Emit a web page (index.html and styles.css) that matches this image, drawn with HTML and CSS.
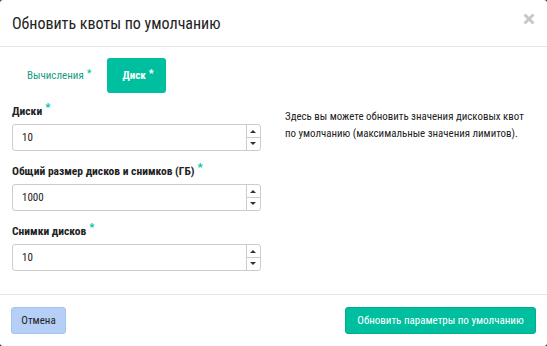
FILE: index.html
```html
<!DOCTYPE html>
<html lang="ru">
<head>
<meta charset="utf-8">
<link rel="stylesheet" href="styles.css">
</head>
<body>
<div class="modal">
  <div class="modal-header">
    <h4 class="title">Обновить квоты по умолчанию</h4>
    <span class="close"><svg width="12" height="12" viewBox="0 0 12 12"><path d="M1.5 1.5 L10.5 10.5 M10.5 1.5 L1.5 10.5" stroke="#c8c8c8" stroke-width="3" stroke-linecap="butt"/></svg></span>
  </div>
  <div class="modal-body">
    <div class="tabs">
      <span class="tab">Вычисления<span class="req">*</span></span>
      <span class="tab active">Диск<span class="req">*</span></span>
    </div>
    <div class="content">
      <div class="form">
        <div class="group">
          <label class="label">Диски<span class="req">*</span></label>
          <div class="input"><span class="value">10</span><span class="spin"><span class="up"></span><span class="down"></span></span></div>
        </div>
        <div class="group">
          <label class="label">Общий размер дисков и снимков (ГБ)<span class="req">*</span></label>
          <div class="input"><span class="value">1000</span><span class="spin"><span class="up"></span><span class="down"></span></span></div>
        </div>
        <div class="group">
          <label class="label">Снимки дисков<span class="req">*</span></label>
          <div class="input"><span class="value">10</span><span class="spin"><span class="up"></span><span class="down"></span></span></div>
        </div>
      </div>
      <p class="help">Здесь вы можете обновить значения дисковых квот по умолчанию (максимальные значения лимитов).</p>
    </div>
  </div>
  <div class="modal-footer">
    <button class="btn cancel">Отмена</button>
    <button class="btn primary">Обновить параметры по умолчанию</button>
  </div>
</div>
</body>
</html>
```

FILE: styles.css
```css
html, body {
  margin: 0;
  padding: 0;
  background: #26343a;
}
body {
  font-family: "Roboto Condensed", "DejaVu Sans Condensed", sans-serif;
  color: #222;
  font-size: 11px;
}
.modal {
  width: 547px;
  height: 346px;
  display: flex;
  flex-direction: column;
  background: #fff;
  border-radius: 3px;
}
.modal-header {
  height: 47px;
  box-sizing: border-box;
  border-bottom: 1px solid #e5e5e5;
  display: flex;
  align-items: center;
  justify-content: space-between;
  padding: 0 12px 0 12px;
}
.title {
  margin: 0;
  font-weight: normal;
  font-size: 16px;
  color: #222;
}
.close {
  display: flex;
  margin-top: -9px;
}
.modal-body {
  flex: 1;
  padding: 11px 12px 0 12px;
}
.tabs {
  display: flex;
  gap: 1px;
  height: 35px;
  align-items: stretch;
}
.tab {
  display: flex;
  align-items: center;
  padding: 0 15px 0 15px;
  color: #179c87;
  border-radius: 3px;
}
.tab .req {
  align-self: flex-start;
  margin-top: 9px;
  margin-left: 3px;
  color: #00bf9f;
}
.tab.active {
  background: #00bf9f;
  color: #fff;
  font-weight: bold;
  padding: 0 12px 0 15px;
}
.tab.active .req {
  color: #fff;
}
.content {
  display: flex;
  gap: 24px;
  margin-top: 10px;
}
.form {
  width: 249px;
  flex: none;
  display: flex;
  flex-direction: column;
  gap: 12px;
}
.group {
  display: flex;
  flex-direction: column;
  gap: 5px;
}
.label {
  font-weight: bold;
  font-size: 11.5px;
  line-height: 16px;
  color: #222;
}
.label .req {
  color: #00bf9f;
  position: relative;
  top: -4px;
  margin-left: 3px;
}
.input {
  height: 27px;
  box-sizing: border-box;
  border: 1px solid #ccc;
  border-radius: 3px;
  display: flex;
  align-items: center;
  justify-content: space-between;
}
.value {
  padding-left: 9px;
}
.spin {
  width: 13px;
  height: 100%;
  border-left: 1px solid #ccc;
  display: flex;
  flex-direction: column;
}
.spin span {
  flex: 1;
  position: relative;
}
.spin .up {
  border-bottom: 1px solid #ccc;
}
.spin .up::after, .spin .down::after {
  content: "";
  position: absolute;
  left: 3px;
  top: 5px;
  border-left: 3px solid transparent;
  border-right: 3px solid transparent;
}
.spin .up::after {
  border-bottom: 3px solid #333;
}
.spin .down::after {
  top: 4px;
  border-top: 3px solid #333;
}
.help {
  margin: 5px 0 0 0;
  width: 250px;
  font-size: 10.9px;
  line-height: 17px;
  color: #222;
}
.modal-footer {
  height: 52px;
  box-sizing: border-box;
  border-top: 1px solid #e5e5e5;
  display: flex;
  justify-content: space-between;
  align-items: flex-start;
  padding: 12px 11px 0 11px;
}
.btn {
  height: 27px;
  border-radius: 3px;
  font-family: inherit;
  font-size: 11px;
  padding: 0 10px;
}
.cancel {
  width: 55px;
  padding: 0;
  background: #b5cff6;
  border: 1px solid #a5c3ef;
  color: #222;
}
.primary {
  width: 191px;
  padding: 0;
  background: #00bf9f;
  border: 1px solid #00ad90;
  color: #fff;
}
```
